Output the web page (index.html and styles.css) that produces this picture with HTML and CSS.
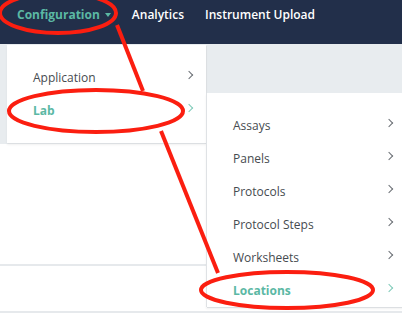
FILE: index.html
```html
<!DOCTYPE html>
<html lang="en">
<head>
    <meta charset="UTF-8">
    <meta name="viewport" content="width=device-width, initial-scale=1.0">
    <title>Configuration</title>
    <link rel="stylesheet" href="styles.css">
</head>
<body>
    <nav class="navbar">
        <a class="nav-item active">Configuration <span class="caret"></span></a>
        <a class="nav-item">Analytics</a>
        <a class="nav-item">Instrument Upload</a>
    </nav>

    <div class="page">
        <div class="page-header"></div>
        <div class="page-body">
            <div class="row row-tall"></div>
            <div class="row"></div>
        </div>

        <div class="dropdown">
            <ul class="menu">
                <li class="menu-item">Application <span class="chevron"></span></li>
                <li class="menu-item selected">Lab <span class="chevron"></span></li>
            </ul>
            <ul class="menu submenu">
                <li class="menu-item">Assays <span class="chevron"></span></li>
                <li class="menu-item">Panels <span class="chevron"></span></li>
                <li class="menu-item">Protocols <span class="chevron"></span></li>
                <li class="menu-item">Protocol Steps <span class="chevron"></span></li>
                <li class="menu-item">Worksheets <span class="chevron"></span></li>
                <li class="menu-item selected">Locations <span class="chevron"></span></li>
            </ul>
        </div>
    </div>

    <!-- marcas rojas de la captura -->
    <svg class="annotations" width="402" height="319" viewBox="0 0 402 319">
        <ellipse cx="58" cy="13" rx="58" ry="20"/>
        <ellipse cx="96" cy="111" rx="87" ry="21"/>
        <ellipse cx="287" cy="290" rx="86" ry="18"/>
        <line x1="117" y1="25" x2="143" y2="91"/>
        <line x1="161" y1="131" x2="218" y2="273"/>
    </svg>
</body>
</html>
```

FILE: styles.css
```css
body {
    margin: 0;
    padding: 0;
    width: 402px;
    height: 319px;
    overflow: hidden;
    font-family: "Open Sans", Arial, sans-serif;
    background: #fff;
    position: relative;
}

.navbar {
    height: 44px;
    box-sizing: border-box;
    background: #222f4a;
    display: flex;
    align-items: flex-start;
    padding: 6px 0 0 17px;
    gap: 21px;
}

.nav-item {
    color: #fff;
    font-size: 12px;
    line-height: 18px;
    font-weight: 600;
    white-space: nowrap;
    display: flex;
    align-items: center;
}

.nav-item.active {
    color: #5bb8a4;
    font-weight: 700;
}

.caret {
    display: inline-block;
    margin-left: 5px;
    border-left: 3px solid transparent;
    border-right: 3px solid transparent;
    border-top: 4px solid #5bb8a4;
}

.page {
    position: relative;
}

.page-header {
    height: 100px;
    background: #e8ecef;
}

.row {
    height: 45px;
    border-bottom: 2px solid #e6e9ec;
}

.row-tall {
    height: 120px;
}

.dropdown {
    position: absolute;
    top: 1px;
    left: 7px;
}

.menu {
    list-style: none;
    margin: 0;
    padding: 16px 0;
    width: 199px;
    background: #fff;
    box-shadow: 1px 1px 0 #dcdfe2, 0 2px 2px rgba(0, 0, 0, 0.06);
}

.submenu {
    position: absolute;
    top: 48px;
    left: 199px;
    padding-bottom: 0;
    border-left: 1px solid #dfe2e5;
}

.menu-item {
    height: 33px;
    padding: 0 14px 0 26px;
    display: flex;
    align-items: center;
    justify-content: space-between;
    font-size: 12px;
    color: #464b50;
}

.menu-item.selected {
    color: #5bb8a4;
    font-weight: 700;
}

.chevron {
    width: 5px;
    height: 5px;
    margin-top: -6px;
    border-top: 1px solid #6a6f74;
    border-right: 1px solid #6a6f74;
    transform: rotate(45deg);
}

.selected .chevron {
    border-color: #7fcab9;
}

.annotations {
    position: absolute;
    top: 0;
    left: 0;
    pointer-events: none;
}

.annotations ellipse,
.annotations line {
    fill: none;
    stroke: #fb1e10;
    stroke-width: 4;
}
```
